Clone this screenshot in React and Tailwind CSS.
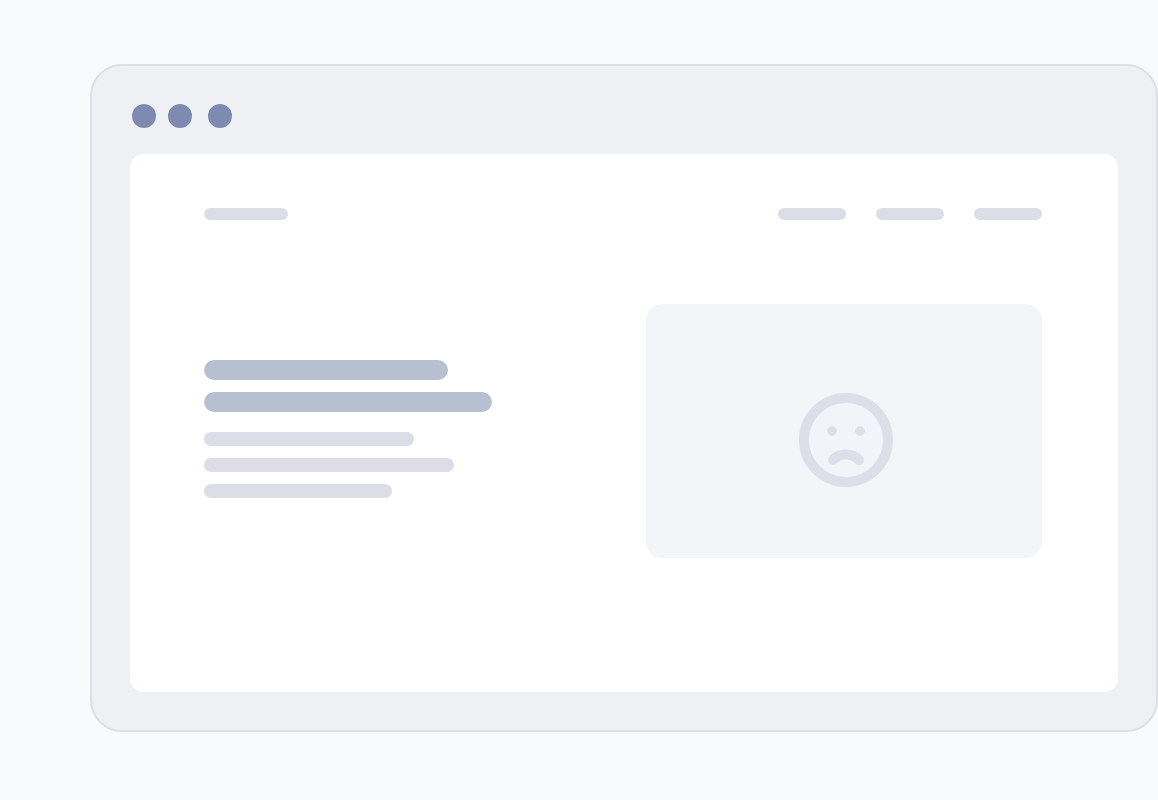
import React from "react";
import clsx from "clsx";

const navBars = ["w-[68px]", "w-[68px]", "w-[68px]"];
const titleBars = ["w-[244px]", "w-[288px]"];
const textBars = ["w-[210px]", "w-[250px]", "w-[188px]"];

const Bar = ({ className }) => (
  <div className={clsx("rounded-full max-w-full", className)} />
);

const SadFace = () => (
  <svg viewBox="0 0 94 94" fill="none" className="w-[94px] h-[94px]" aria-hidden="true">
    <circle cx="47" cy="47" r="42" fill="#f3f4fa" stroke="#dcdfe8" strokeWidth="10" />
    {/* eyes */}
    <rect x="28.5" y="33.5" width="9" height="9" rx="3.6" transform="rotate(45 33 38)" fill="#dcdfe8" />
    <rect x="56.5" y="33.5" width="9" height="9" rx="3.6" transform="rotate(45 61 38)" fill="#dcdfe8" />
    {/* mouth */}
    <path d="M34 67C40.5 59.7 53.5 59.7 60 67" stroke="#dcdfe8" strokeWidth="10" strokeLinecap="round" />
  </svg>
);

const WindowDots = () => (
  <div className="flex pl-0.5">
    <span className="w-6 h-6 rounded-full bg-[#7f8ab1]" />
    <span className="w-6 h-6 rounded-full bg-[#7f8ab1] ml-3" />
    <span className="w-6 h-6 rounded-full bg-[#7f8ab1] ml-4" />
  </div>
);

const App = () => {
  return (
    <div className="min-h-screen bg-[#f9fafc] pt-16 pb-[68px] pl-[90px]">
      <div className="rounded-[32px] border-2 border-[#dcdfe7] bg-[#eef0f4] p-[38px]">
        <WindowDots />

        <main className="mt-[26px] rounded-[14px] bg-white pt-[54px] pb-[134px] pl-[74px] pr-[76px]">
          <div className="flex items-center justify-between">
            <Bar className="h-3 w-[84px] bg-[#dcdde7]" />
            <div className="flex gap-[30px]">
              {navBars.map((width, i) => (
                <Bar key={i} className={clsx("h-3 bg-[#dcdde7]", width)} />
              ))}
            </div>
          </div>

          <div className="mt-[84px] flex items-start justify-between">
            <div className="pt-14">
              <div className="flex flex-col gap-3">
                {titleBars.map((width, i) => (
                  <Bar key={i} className={clsx("h-5 bg-[#b7c0d1]", width)} />
                ))}
              </div>
              <div className="mt-5 flex flex-col gap-3">
                {textBars.map((width, i) => (
                  <Bar key={i} className={clsx("h-3.5 bg-[#dcdde7]", width)} />
                ))}
              </div>
            </div>

            <div className="flex w-[396px] justify-center rounded-2xl bg-[#f3f5f9] pt-[89px] pb-[71px] pl-1">
              <SadFace />
            </div>
          </div>
        </main>
      </div>
    </div>
  );
};

export default App;
